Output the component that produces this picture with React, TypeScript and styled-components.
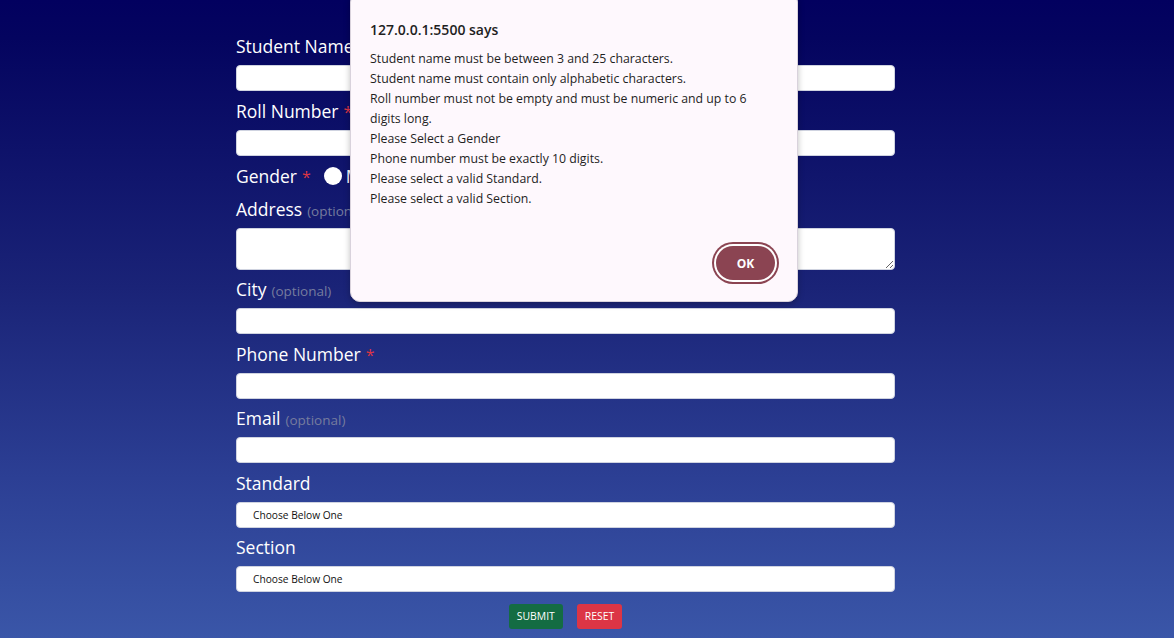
import React from "react";
import styled, { createGlobalStyle } from "styled-components";

const Global = createGlobalStyle`
  html, body { margin: 0; padding: 0; height: 100%; }
  body {
    font-family: "Segoe UI", "Open Sans", "Noto Sans", sans-serif;
    background: linear-gradient(to bottom, #02005f 0%, #04045f 6%, #1a2377 45%, #2c3f94 75%, #3a56a8 100%);
    min-height: 638px;
    overflow: hidden;
  }
`;

const Page = styled.div`
  position: relative;
  width: 1174px;
  height: 638px;
  padding-top: 34px;
  box-sizing: border-box;
`;

const Form = styled.form`
  margin-left: 236px;
  width: 659px;
  display: flex;
  flex-direction: column;
  gap: 7.5px;
`;

const Field = styled.div`
  display: flex;
  flex-direction: column;
  gap: 7px;
`;

const Label = styled.label`
  height: 24px;
  line-height: 24px;
  font-size: 17.5px;
  color: #ffffff;
  white-space: nowrap;
`;

const Req = styled.span`
  color: #dc3545;
  margin-left: 5px;
  font-size: 16px;
`;

const Opt = styled.span`
  color: #767c9e;
  font-size: 13.5px;
  margin-left: 5px;
`;

const Input = styled.input`
  box-sizing: border-box;
  height: 26px;
  width: 100%;
  border: 1px solid #cfd3e0;
  border-radius: 4px;
  background: #fff;
  margin: 0;
`;

const TextArea = styled.textarea`
  box-sizing: border-box;
  height: 42px;
  width: 100%;
  border: 1px solid #cfd3e0;
  border-radius: 4px;
  background: #fff;
  margin: 0;
  display: block;
  resize: vertical;
`;

const Select = styled.select`
  box-sizing: border-box;
  height: 26px;
  width: 100%;
  border: 1px solid #cfd3e0;
  border-radius: 4px;
  background: #fff;
  margin: 0;
  padding-left: 16px;
  font-family: "Segoe UI", "Open Sans", sans-serif;
  font-size: 10.2px;
  color: #111;
  appearance: none;
`;

const GenderRow = styled.div`
  height: 26px;
  display: flex;
  align-items: center;
  gap: 13px;
`;

const RadioLabel = styled.span`
  display: flex;
  align-items: center;
  gap: 4px;
  color: #fff;
  font-size: 17.5px;
`;

const Radio = styled.span`
  width: 18px;
  height: 18px;
  border-radius: 50%;
  background: #fff;
  display: inline-block;
`;

const Buttons = styled.div`
  display: flex;
  justify-content: center;
  gap: 14px;
  margin-top: 4px;
`;

const Btn = styled.button<{ $color: string }>`
  height: 25px;
  padding: 0 8px;
  border: none;
  border-radius: 3px;
  background: ${(p) => p.$color};
  color: #fff;
  font-family: "Segoe UI", "Open Sans", sans-serif;
  font-size: 10.4px;
  text-transform: uppercase;
`;

const Dialog = styled.div`
  position: absolute;
  left: 350px;
  top: -8px;
  width: 448px;
  height: 310px;
  box-sizing: border-box;
  background: #fef8fd;
  border: 1px solid #d9d2dc;
  border-radius: 10px;
  box-shadow: 0 2px 6px rgba(0, 0, 0, 0.25);
  padding: 27px 18px 17px 19px;
  display: flex;
  flex-direction: column;
  color: #1f1f1f;
`;

const Title = styled.div`
  font-size: 14px;
  font-weight: 600;
  line-height: 20px;
  margin-bottom: 9px;
`;

const Message = styled.div`
  font-size: 12.3px;
  line-height: 20px;
  flex: 1;
  padding-right: 18px;
`;

const Actions = styled.div`
  display: flex;
  justify-content: flex-end;
`;

const OkButton = styled.button`
  width: 59px;
  height: 34px;
  margin: 4px;
  border: none;
  border-radius: 17px;
  background: #8b4452;
  color: #fff;
  font-family: "Segoe UI", "Open Sans", sans-serif;
  font-weight: 700;
  font-size: 12px;
  box-shadow: 0 0 0 2px #ffffff, 0 0 0 4px #8b4452;
`;

const messages = [
  "Student name must be between 3 and 25 characters.",
  "Student name must contain only alphabetic characters.",
  "Roll number must not be empty and must be numeric and up to 6 digits long.",
  "Please Select a Gender",
  "Phone number must be exactly 10 digits.",
  "Please select a valid Standard.",
  "Please select a valid Section.",
];

export default function App() {
  return (
    <Page>
      <Global />
      <Form onSubmit={(e) => e.preventDefault()}>
        <Field>
          <Label>Student Name<Req>*</Req></Label>
          <Input />
        </Field>
        <Field>
          <Label>Roll Number<Req>*</Req></Label>
          <Input />
        </Field>
        <GenderRow>
          <Label>Gender<Req>*</Req></Label>
          <RadioLabel><Radio />Male</RadioLabel>
          <RadioLabel><Radio />Female</RadioLabel>
        </GenderRow>
        <Field>
          <Label>Address<Opt>(optional)</Opt></Label>
          <TextArea />
        </Field>
        <Field>
          <Label>City<Opt>(optional)</Opt></Label>
          <Input />
        </Field>
        <Field>
          <Label>Phone Number<Req>*</Req></Label>
          <Input />
        </Field>
        <Field>
          <Label>Email<Opt>(optional)</Opt></Label>
          <Input />
        </Field>
        <Field>
          <Label>Standard</Label>
          <Select defaultValue="">
            <option value="">Choose Below One</option>
          </Select>
        </Field>
        <Field>
          <Label>Section</Label>
          <Select defaultValue="">
            <option value="">Choose Below One</option>
          </Select>
        </Field>
        <Buttons>
          <Btn type="submit" $color="#146c43">Submit</Btn>
          <Btn type="reset" $color="#dc3545">Reset</Btn>
        </Buttons>
      </Form>
      <Dialog>
        <Title>127.0.0.1:5500 says</Title>
        <Message>
          {messages.map((m) => (
            <div key={m}>{m}</div>
          ))}
        </Message>
        <Actions>
          <OkButton>OK</OkButton>
        </Actions>
      </Dialog>
    </Page>
  );
}
